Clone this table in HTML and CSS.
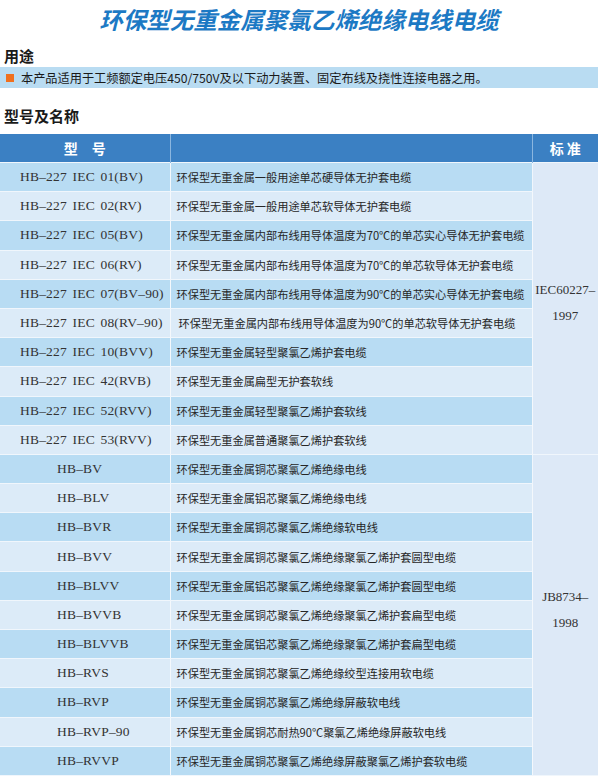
FILE: index.html
```html
<!DOCTYPE html>
<html lang="zh">
<head>
<meta charset="utf-8">
<title>环保型无重金属聚氯乙烯绝缘电线电缆</title>
<link rel="stylesheet" href="styles.css">
</head>
<body>
<h1 class="title">环保型无重金属聚氯乙烯绝缘电线电缆</h1>
<h2 class="section">用途</h2>
<div class="usage"><span class="bullet"></span>本产品适用于工频额定电压450/750V及以下动力装置、固定布线及挠性连接电器之用。</div>
<h2 class="section section-models">型号及名称</h2>
<table class="spec">
  <colgroup><col class="c1"><col class="c2"><col class="c3"></colgroup>
  <thead>
    <tr><th>型　号</th><th></th><th>标 准</th></tr>
  </thead>
  <tbody>
    <tr class="dark"><td class="m">HB–227 IEC 01(BV)</td><td class="n">环保型无重金属一般用途单芯硬导体无护套电缆</td><td class="std" rowspan="10">IEC60227–<br>1997</td></tr>
    <tr class="light"><td class="m">HB–227 IEC 02(RV)</td><td class="n">环保型无重金属一般用途单芯软导体无护套电缆</td></tr>
    <tr class="dark"><td class="m">HB–227 IEC 05(BV)</td><td class="n">环保型无重金属内部布线用导体温度为70℃的单芯实心导体无护套电缆</td></tr>
    <tr class="light"><td class="m">HB–227 IEC 06(RV)</td><td class="n">环保型无重金属内部布线用导体温度为70℃的单芯软导体无护套电缆</td></tr>
    <tr class="dark"><td class="m">HB–227 IEC 07(BV–90)</td><td class="n">环保型无重金属内部布线用导体温度为90℃的单芯实心导体无护套电缆</td></tr>
    <tr class="light"><td class="m">HB–227 IEC 08(RV–90)</td><td class="n n2">环保型无重金属内部布线用导体温度为90℃的单芯软导体无护套电缆</td></tr>
    <tr class="dark"><td class="m">HB–227 IEC 10(BVV)</td><td class="n">环保型无重金属轻型聚氯乙烯护套电缆</td></tr>
    <tr class="light"><td class="m">HB–227 IEC 42(RVB)</td><td class="n">环保型无重金属扁型无护套软线</td></tr>
    <tr class="dark"><td class="m">HB–227 IEC 52(RVV)</td><td class="n">环保型无重金属轻型聚氯乙烯护套软线</td></tr>
    <tr class="light"><td class="m">HB–227 IEC 53(RVV)</td><td class="n">环保型无重金属普通聚氯乙烯护套软线</td></tr>
    <tr class="dark"><td class="m g2">HB–BV</td><td class="n">环保型无重金属铜芯聚氯乙烯绝缘电线</td><td class="std" rowspan="11">JB8734–<br>1998</td></tr>
    <tr class="light"><td class="m g2">HB–BLV</td><td class="n">环保型无重金属铝芯聚氯乙烯绝缘电线</td></tr>
    <tr class="dark"><td class="m g2">HB–BVR</td><td class="n">环保型无重金属铜芯聚氯乙烯绝缘软电线</td></tr>
    <tr class="light"><td class="m g2">HB–BVV</td><td class="n">环保型无重金属铜芯聚氯乙烯绝缘聚氯乙烯护套圆型电缆</td></tr>
    <tr class="dark"><td class="m g2">HB–BLVV</td><td class="n">环保型无重金属铝芯聚氯乙烯绝缘聚氯乙烯护套圆型电缆</td></tr>
    <tr class="light"><td class="m g2">HB–BVVB</td><td class="n">环保型无重金属铜芯聚氯乙烯绝缘聚氯乙烯护套扁型电缆</td></tr>
    <tr class="dark"><td class="m g2">HB–BLVVB</td><td class="n">环保型无重金属铝芯聚氯乙烯绝缘聚氯乙烯护套扁型电缆</td></tr>
    <tr class="light"><td class="m g2">HB–RVS</td><td class="n">环保型无重金属铜芯聚氯乙烯绝缘绞型连接用软电缆</td></tr>
    <tr class="dark"><td class="m g2">HB–RVP</td><td class="n">环保型无重金属铜芯聚氯乙烯绝缘屏蔽软电线</td></tr>
    <tr class="light"><td class="m g2">HB–RVP–90</td><td class="n">环保型无重金属铜芯耐热90℃聚氯乙烯绝缘屏蔽软电线</td></tr>
    <tr class="dark"><td class="m g2">HB–RVVP</td><td class="n">环保型无重金属铜芯聚氯乙烯绝缘屏蔽聚氯乙烯护套软电缆</td></tr>
  </tbody>
</table>
</body>
</html>
```
FILE: styles.css
```css
html, body {
  margin: 0;
  padding: 0;
  background: #ffffff;
}
body {
  font-family: "Noto Sans CJK SC", "Noto Sans", sans-serif;
  color: #222;
  width: 598px;
}
.title {
  margin: 0;
  padding-top: 6px;
  height: 40px;
  text-align: center;
  font-size: 23.5px;
  line-height: 26px;
  font-weight: 700;
  font-style: italic;
  color: #1c79c4;
}
.section {
  margin: 0;
  padding-left: 4px;
  font-size: 15px;
  line-height: 20px;
  font-weight: 700;
  color: #1a1a1a;
  height: 21px;
}
.section-models {
  margin-top: 18px;
  height: 28px;
}
.usage {
  display: flex;
  align-items: center;
  height: 21px;
  background: #b9dcf2;
  font-size: 12.2px;
  color: #1a1a1a;
  padding-left: 6px;
}
.bullet {
  width: 8px;
  height: 8px;
  background: #f0701e;
  margin-right: 7px;
  flex: none;
}
.spec {
  width: 598px;
  border-collapse: collapse;
  table-layout: fixed;
}
.c1 { width: 170px; }
.c2 { width: 362px; }
.c3 { width: 66px; }
.spec th {
  background: #3b80c3;
  color: #ffffff;
  height: 28px;
  font-size: 14px;
  font-weight: 700;
  border-right: 1px solid #8bb6df;
  padding: 0;
}
.spec th:last-child { border-right: none; }
.spec td {
  height: 28.2px;
  padding: 0;
  border: 1px solid #f0f6fc;
  border-left: none;
  white-space: nowrap;
}
.spec td:first-child { border-right: 1px solid #f4f8fc; }
.dark td { background: #b8dcf3; }
.light td { background: #dcebf8; }
.spec td.std {
  background: #dde9f7;
  border-right: none;
  border-left: 1px solid #f4f8fc;
  text-align: center;
  font-family: "Liberation Serif", "DejaVu Serif", serif;
  font-size: 13px;
  line-height: 26px;
  color: #333;
  padding-bottom: 10px;
}
.m {
  font-family: "Liberation Serif", "DejaVu Serif", serif;
  font-size: 13.5px;
  letter-spacing: 0.2px;
  word-spacing: 2px;
  color: #333;
  padding-left: 20px !important;
}
.m.g2 { padding-left: 57px !important; }
.n {
  font-size: 11.2px;
  color: #262626;
  padding-left: 6px !important;
}
.n2 { padding-left: 8px !important; }
```
